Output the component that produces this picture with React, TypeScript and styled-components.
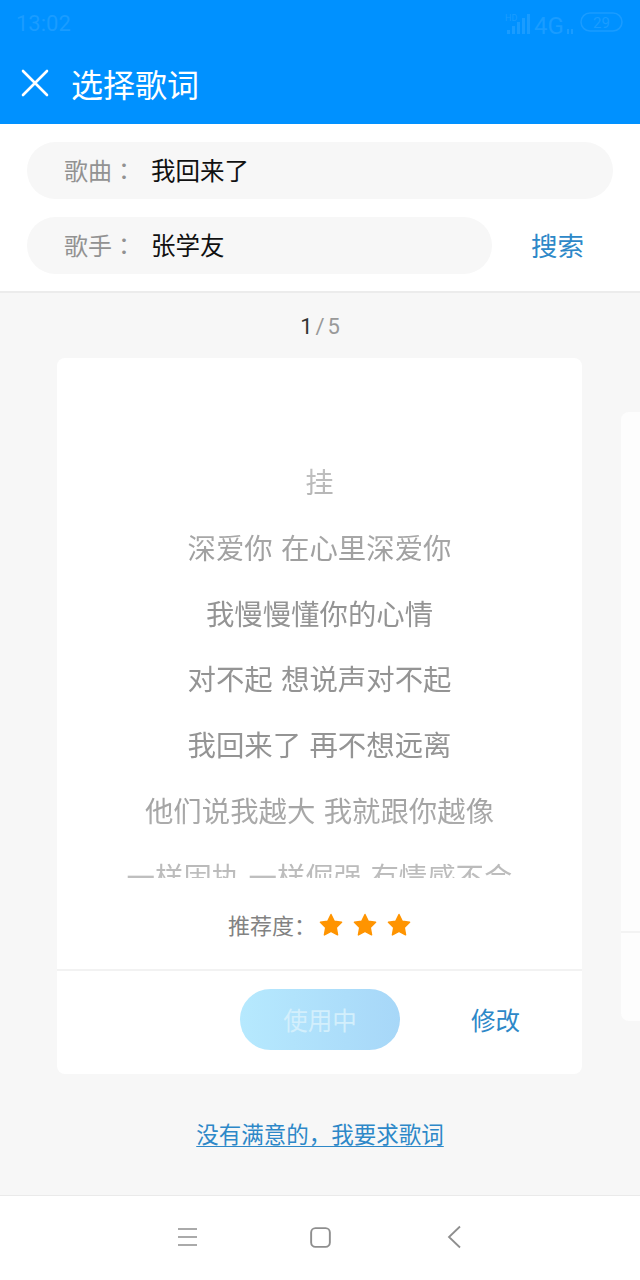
import React from 'react';
import styled, { createGlobalStyle } from 'styled-components';

const Global = createGlobalStyle`
  html, body { margin: 0; padding: 0; background: #f7f7f7; }
  * { box-sizing: border-box; }
  #root { width: 640px; height: 1280px; overflow: hidden; }
`;

const Page = styled.div`
  width: 640px; height: 1280px; display: flex; flex-direction: column;
  font-family: "Noto Sans CJK SC", "Liberation Sans", sans-serif;
  background: #f7f7f7; overflow: hidden;
`;
const Header = styled.header`
  height: 124px; flex: none; background: #0091ff; display: flex; flex-direction: column;
`;
const StatusBar = styled.div`
  height: 46px; flex: none; display: flex; align-items: center; justify-content: space-between;
  padding: 2px 16px 0 16px; color: #1a9cff;
`;
const Clock = styled.span`
  font: 22px/1 Roboto, sans-serif;
`;
const StatusIcons = styled.div`
  display: flex; align-items: center;
`;
const TitleBar = styled.div`
  flex: 1; display: flex; align-items: center; padding: 0 0 0 21px; gap: 22px; margin-top: -4px;
`;
const Title = styled.h1`
  margin: 0; color: #fff; font-size: 32px; font-weight: 400; line-height: 1;
`;
const SearchPanel = styled.section`
  height: 169px; flex: none; background: #fff; border-bottom: 2px solid #ececec;
  padding: 18px 27px 0; display: flex; flex-direction: column; gap: 18px;
`;
const SearchRow = styled.div`
  display: flex; align-items: center;
`;
const Pill = styled.div`
  height: 57px; flex: 1; border-radius: 29px; background: #f7f7f7;
  display: flex; align-items: center; padding: 0 0 2px 37px;
`;
const FieldLabel = styled.span`
  width: 87px; flex: none; color: #929292; font-size: 24px; white-space: pre;
`;
const FieldColon = styled.span`
  font-family: "Noto Sans CJK TC", sans-serif;
`;
const FieldValue = styled.span`
  color: #111; font-size: 24.5px;
`;
const SearchLink = styled.span`
  width: 121px; flex: none; padding: 0 0 2px 39px; color: #2d88c8; font-size: 26.5px; white-space: nowrap;
`;
const Pager = styled.div`
  height: 65px; flex: none; display: flex; align-items: center; justify-content: center;
  padding-top: 3px; font: 22px/1 Roboto, sans-serif; color: #999; word-spacing: -2.500px;
`;
const PagerCurrent = styled.span`
  color: #333;
`;
const Carousel = styled.div`
  display: flex; align-items: center; gap: 39px; padding-left: 57px; height: 716px; flex: none; overflow: hidden;
`;
const Card = styled.article`
  width: 525px; height: 716px; flex: none; background: #fff; border-radius: 8px;
  display: flex; flex-direction: column;
`;
const NextCard = styled.aside`
  width: 525px; height: 609px; flex: none; background: #fdfdfd; border-radius: 8px;
  display: flex; flex-direction: column; justify-content: flex-end;
`;
const NextCardFoot = styled.div`
  height: 90px; border-top: 2px solid #f3f3f3;
`;
const Lyrics = styled.div`
  height: 520px; flex: none; overflow: hidden; padding-top: 90px; text-align: center;
  -webkit-mask-image: linear-gradient(to bottom, rgba(0,0,0,.55) 100px, #000 230px, #000 400px, rgba(0,0,0,.6) 520px);
  mask-image: linear-gradient(to bottom, rgba(0,0,0,.55) 100px, #000 230px, #000 400px, rgba(0,0,0,.6) 520px);
`;
const LyricLine = styled.p`
  margin: 0; height: 65.8px; line-height: 65.8px; font-size: 28.4px; color: #949494; white-space: nowrap; word-spacing: 2px;
`;
const Rating = styled.div`
  height: 93px; flex: none; display: flex; align-items: center; justify-content: center; gap: 3px;
  color: #828282; font-size: 22px; border-bottom: 2px solid #f2f2f2;
`;
const Stars = styled.div`
  display: flex; gap: 10px; margin-top: 2px;
`;
const Actions = styled.div`
  flex: 1; display: flex; align-items: center; padding: 0 0 6px 183px;
`;
const UseButton = styled.div`
  width: 160px; height: 61px; border-radius: 31px; display: flex; align-items: center; justify-content: center;
  background: linear-gradient(90deg, #b6e9fe, #a7d7f8); color: #d3effc; font-size: 24.5px;
`;
const EditLink = styled.span`
  margin-left: 71px; color: #2d88c8; font-size: 24.5px;
`;
const Request = styled.div`
  flex: 1; display: flex; align-items: center; justify-content: center; padding-bottom: 3px;
`;
const RequestLink = styled.a`
  color: #2d88c8; font-size: 22.5px; text-decoration: underline; text-underline-offset: 3px; text-decoration-thickness: 1px;
`;
const NavBar = styled.nav`
  height: 85px; flex: none; background: #fff; border-top: 1px solid #eaeaea;
  display: flex; align-items: center; justify-content: center; gap: 112px; padding: 0 2px 2px 0;
`;
const BackIcon = styled.svg`
  margin-left: 4px;
`;

const Star = () => (
  <svg width="24" height="24" viewBox="0 0 24 24" aria-hidden="true">
    <path d="M12 1.5l3.3 6.8 7.3 1-5.3 5.2 1.3 7.4-6.6-3.5-6.6 3.5 1.3-7.4L1.400 9.300l7.300-1z" fill="#ff9400" stroke="#ff9400" strokeWidth="1.400" strokeLinejoin="round" />
  </svg>
);

const Signal = () => (
  <svg width="119" height="32" viewBox="0 -3 119 32" fill="none" aria-hidden="true">
    <g fill="#1a9cff">
      <rect x="2" y="19" width="3" height="4" /><rect x="7" y="15" width="3" height="8" />
      <rect x="12" y="11" width="3" height="12" /><rect x="17" y="7" width="3" height="16" />
      <rect x="22" y="3" width="3" height="20" />
    </g>
    <text x="0" y="10" fontSize="9" fontFamily="Roboto, sans-serif" fill="#1a9cff">HD</text>
    <text x="29" y="23" fontSize="24" fontFamily="Roboto, sans-serif" fill="#1a9cff">4G</text>
    <rect x="62" y="18" width="2" height="5" fill="#1a9cff" /><rect x="66" y="18" width="2" height="5" fill="#1a9cff" />
    <rect x="76" y="2" width="41" height="18" rx="9" stroke="#1a9cff" strokeWidth="1.500" />
    <text x="96.500" y="17" fontSize="15" textAnchor="middle" fontFamily="Roboto, sans-serif" fill="#1a9cff">29</text>
  </svg>
);

const lyrics = ['挂', '深爱你 在心里深爱你', '我慢慢懂你的心情', '对不起 想说声对不起', '我回来了 再不想远离', '他们说我越大 我就跟你越像', '一样固执 一样倔强 有情感不会'];

export default function App() {
  return (
    <Page>
      <Global />
      <Header>
        <StatusBar>
          <Clock>13:02</Clock>
          <StatusIcons><Signal /></StatusIcons>
        </StatusBar>
        <TitleBar>
          <svg width="28" height="28" viewBox="0 0 28 28" fill="none" aria-hidden="true">
            <path d="M2 2l24 24M26 2L2 26" stroke="#fff" strokeWidth="2.600" strokeLinecap="round" />
          </svg>
          <Title>选择歌词</Title>
        </TitleBar>
      </Header>
      <SearchPanel>
        <SearchRow>
          <Pill><FieldLabel>歌曲<FieldColon>：</FieldColon></FieldLabel><FieldValue>我回来了</FieldValue></Pill>
        </SearchRow>
        <SearchRow>
          <Pill><FieldLabel>歌手<FieldColon>：</FieldColon></FieldLabel><FieldValue>张学友</FieldValue></Pill>
          <SearchLink>搜索</SearchLink>
        </SearchRow>
      </SearchPanel>
      <Pager><PagerCurrent>1</PagerCurrent>&nbsp;/ 5</Pager>
      <Carousel>
        <Card>
          <Lyrics>
            {lyrics.map((l) => <LyricLine key={l}>{l}</LyricLine>)}
          </Lyrics>
          <Rating>
            <span>推荐度：</span>
            <Stars><Star /><Star /><Star /></Stars>
          </Rating>
          <Actions>
            <UseButton>使用中</UseButton>
            <EditLink>修改</EditLink>
          </Actions>
        </Card>
        <NextCard><NextCardFoot /></NextCard>
      </Carousel>
      <Request><RequestLink>没有满意的，我要求歌词</RequestLink></Request>
      <NavBar>
        <svg width="21" height="20" viewBox="0 0 21 20" fill="none" aria-hidden="true">
          <path d="M1 2h19M1 10h19M1 18h19" stroke="#8e8e8e" strokeWidth="1.600" />
        </svg>
        <svg width="21" height="21" viewBox="0 0 22 22" fill="none" aria-hidden="true">
          <rect x="1.200" y="1.200" width="19.600" height="19.600" rx="4.500" stroke="#8e8e8e" strokeWidth="2" />
        </svg>
        <BackIcon width="14" height="24" viewBox="0 0 14 24" fill="none" aria-hidden="true">
          <path d="M13 1.500L2 12l11 10.500" stroke="#8e8e8e" strokeWidth="1.800" />
        </BackIcon>
      </NavBar>
    </Page>
  );
}
